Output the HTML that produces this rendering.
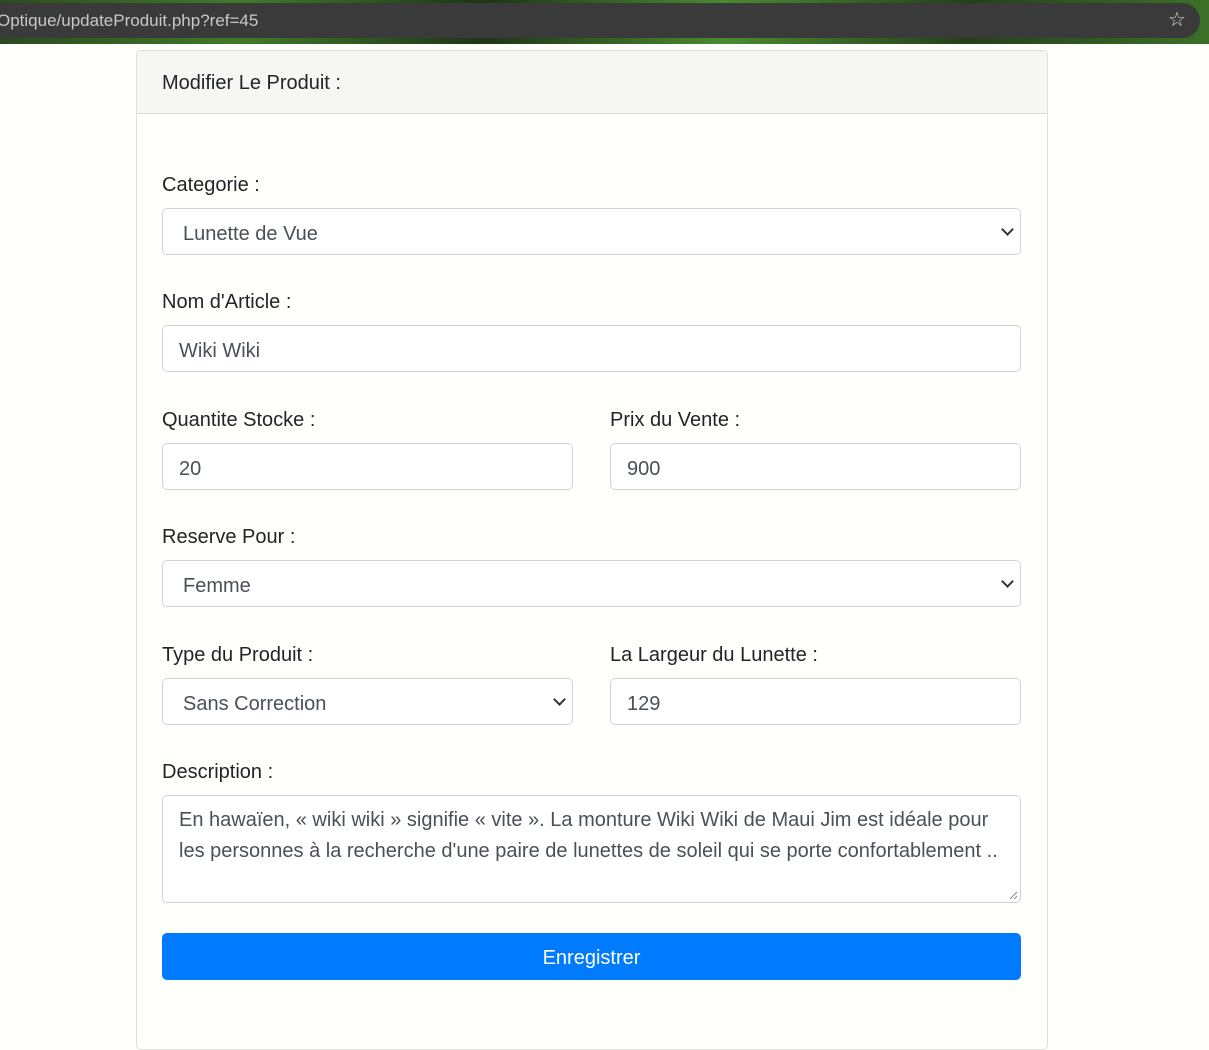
<!DOCTYPE html>
<html><head><style>
*{box-sizing:border-box}
body{margin:0;background:#fffffb;font-family:"Liberation Sans",sans-serif;color:#212529;width:1209px;height:985px;overflow:hidden;position:relative}
.top{position:absolute;left:0;top:0;width:1209px;height:44px;background:linear-gradient(90deg,#2c4a1f,#3f7a2a 20%,#1e3517 40%,#4a8a30 60%,#24401a 80%,#3c7028);}
.pill{position:absolute;left:-20px;top:3px;width:1220px;height:35px;background:#3a3a3a;border-radius:18px;}
.url{position:absolute;left:-3px;top:11px;font-size:17px;color:#c8c8c8;}
.star{position:absolute;left:1168px;top:7px;font-size:20px;color:#ddd}
.card{position:absolute;left:136px;top:50px;width:912px;height:1000px;border:1px solid #dfdfdf;border-radius:5px;background:#fffffb}
.hd{height:63px;background:#f6f6f3;border-bottom:1px solid #dcdcdc;padding:21px 25px;font-size:20px;border-radius:5px 5px 0 0}
.l{position:absolute;font-size:20px}
.i{position:absolute;height:47px;border:1px solid #ced4da;border-radius:5px;background:#fff;font-size:20px;color:#495057;padding:14px 16px 0}
.s{padding-left:20px}
.s:after{content:"";position:absolute;right:8px;top:16px;width:7px;height:7px;border-right:2px solid #333;border-bottom:2px solid #333;transform:rotate(45deg)}
.btn{position:absolute;left:25px;top:882px;width:859px;height:47px;background:#007bff;border-radius:5px;color:#fff;font-size:20px;text-align:center;line-height:50px}
</style></head><body>
<div class="top"><div class="pill"></div><div class="url">Optique/updateProduit.php?ref=45</div><div class="star">☆</div></div>
<div class="card">
<div class="hd">Modifier Le Produit :</div>
<div class="l" style="left:25px;top:123px">Categorie :</div>
<div class="i s" style="left:25px;top:157px;width:859px">Lunette de Vue</div>
<div class="l" style="left:25px;top:240px">Nom d'Article :</div>
<div class="i" style="left:25px;top:274px;width:859px">Wiki Wiki</div>
<div class="l" style="left:25px;top:358px">Quantite Stocke :</div>
<div class="i" style="left:25px;top:392px;width:411px">20</div>
<div class="l" style="left:473px;top:358px">Prix du Vente :</div>
<div class="i" style="left:473px;top:392px;width:411px">900</div>
<div class="l" style="left:25px;top:475px">Reserve Pour :</div>
<div class="i s" style="left:25px;top:509px;width:859px">Femme</div>
<div class="l" style="left:25px;top:593px">Type du Produit :</div>
<div class="i s" style="left:25px;top:627px;width:411px">Sans Correction</div>
<div class="l" style="left:473px;top:593px">La Largeur du Lunette :</div>
<div class="i" style="left:473px;top:627px;width:411px">129</div>
<div class="l" style="left:25px;top:710px">Description :</div>
<div class="i" style="left:25px;top:744px;width:859px;height:108px;line-height:31px;padding-top:9px">En hawaïen, « wiki wiki » signifie « vite ». La monture Wiki Wiki de Maui Jim est idéale pour les personnes à la recherche d'une paire de lunettes de soleil qui se porte confortablement ..<svg style="position:absolute;right:2px;bottom:2px" width="10" height="10"><path d="M9 2L2 9M9 6L6 9" stroke="#888" stroke-width="1"/></svg></div>
<div class="btn">Enregistrer</div>
</div>
</body></html>
